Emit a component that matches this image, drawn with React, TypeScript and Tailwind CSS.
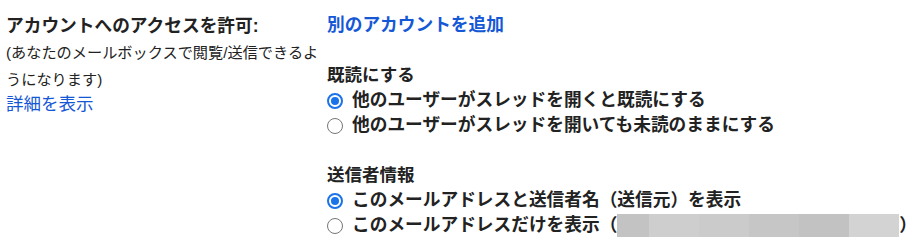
import React from "react";

const font = { fontFamily: '"Liberation Sans", "Noto Sans CJK JP", sans-serif' };

function Radio({ checked }: { checked?: boolean }) {
  return checked ? (
    <span className="flex h-4 w-4 shrink-0 items-center justify-center rounded-full border-2 border-[#1a73e8] bg-white">
      <span className="h-2 w-2 rounded-full bg-[#1a73e8]" />
    </span>
  ) : (
    <span className="h-4 w-4 shrink-0 rounded-full border border-[#767676] bg-white" />
  );
}

function Option({ checked, children }: { checked?: boolean; children: React.ReactNode }) {
  return (
    <div className="flex h-[25px] items-center whitespace-nowrap">
      <Radio checked={checked} />
      <span className="ml-[9px] font-bold text-[17.7px] leading-[25px] text-[#222]">{children}</span>
    </div>
  );
}

const blocks = ["#c3c3c3", "#cecece", "#cbcbcb", "#c6c6c6", "#c2c2c2", "#d3d3d3"];
const widths = [32, 50, 50, 50, 50, 50];

export default function App() {
  return (
    <div className="flex h-[251px] w-[916px] overflow-hidden bg-white text-[#222]" style={font}>
      <div className="w-[321px] shrink-0 pl-[6px] pt-[13px]">
        <div className="whitespace-nowrap text-[17.7px] font-bold leading-[26px]">アカウントへのアクセスを許可:</div>
        <div className="whitespace-nowrap text-[15.2px] leading-[27px] text-[#222]">
          (あなたのメールボックスで閲覧/送信できるよ
          <br />
          うになります)
        </div>
        <div className="whitespace-nowrap text-[17.5px] leading-[22px] text-[#1558d6]">詳細を表示</div>
      </div>
      <div className="flex flex-col pt-[13px] pl-[6px]">
        <div className="whitespace-nowrap text-[17.7px] font-bold leading-[25px] text-[#1558d6]">別のアカウントを追加</div>
        <div className="mt-6">
          <div className="whitespace-nowrap text-[17.5px] font-semibold leading-[26px]">既読にする</div>
          <Option checked>他のユーザーがスレッドを開くと既読にする</Option>
          <Option>他のユーザーがスレッドを開いても未読のままにする</Option>
        </div>
        <div className="mt-6">
          <div className="whitespace-nowrap text-[17.5px] font-semibold leading-[26px]">送信者情報</div>
          <Option checked>このメールアドレスと送信者名（送信元）を表示</Option>
          <Option>
            <span className="inline-flex items-center">
              このメールアドレスだけを表示（
              <span className="inline-flex h-[23px]">
                {blocks.map((c, i) => (
                  <span key={i} className="h-full" style={{ backgroundColor: c, width: widths[i] }} />
                ))}
              </span>
              <span className="tracking-[-8px]">）</span>
            </span>
          </Option>
        </div>
      </div>
    </div>
  );
}
